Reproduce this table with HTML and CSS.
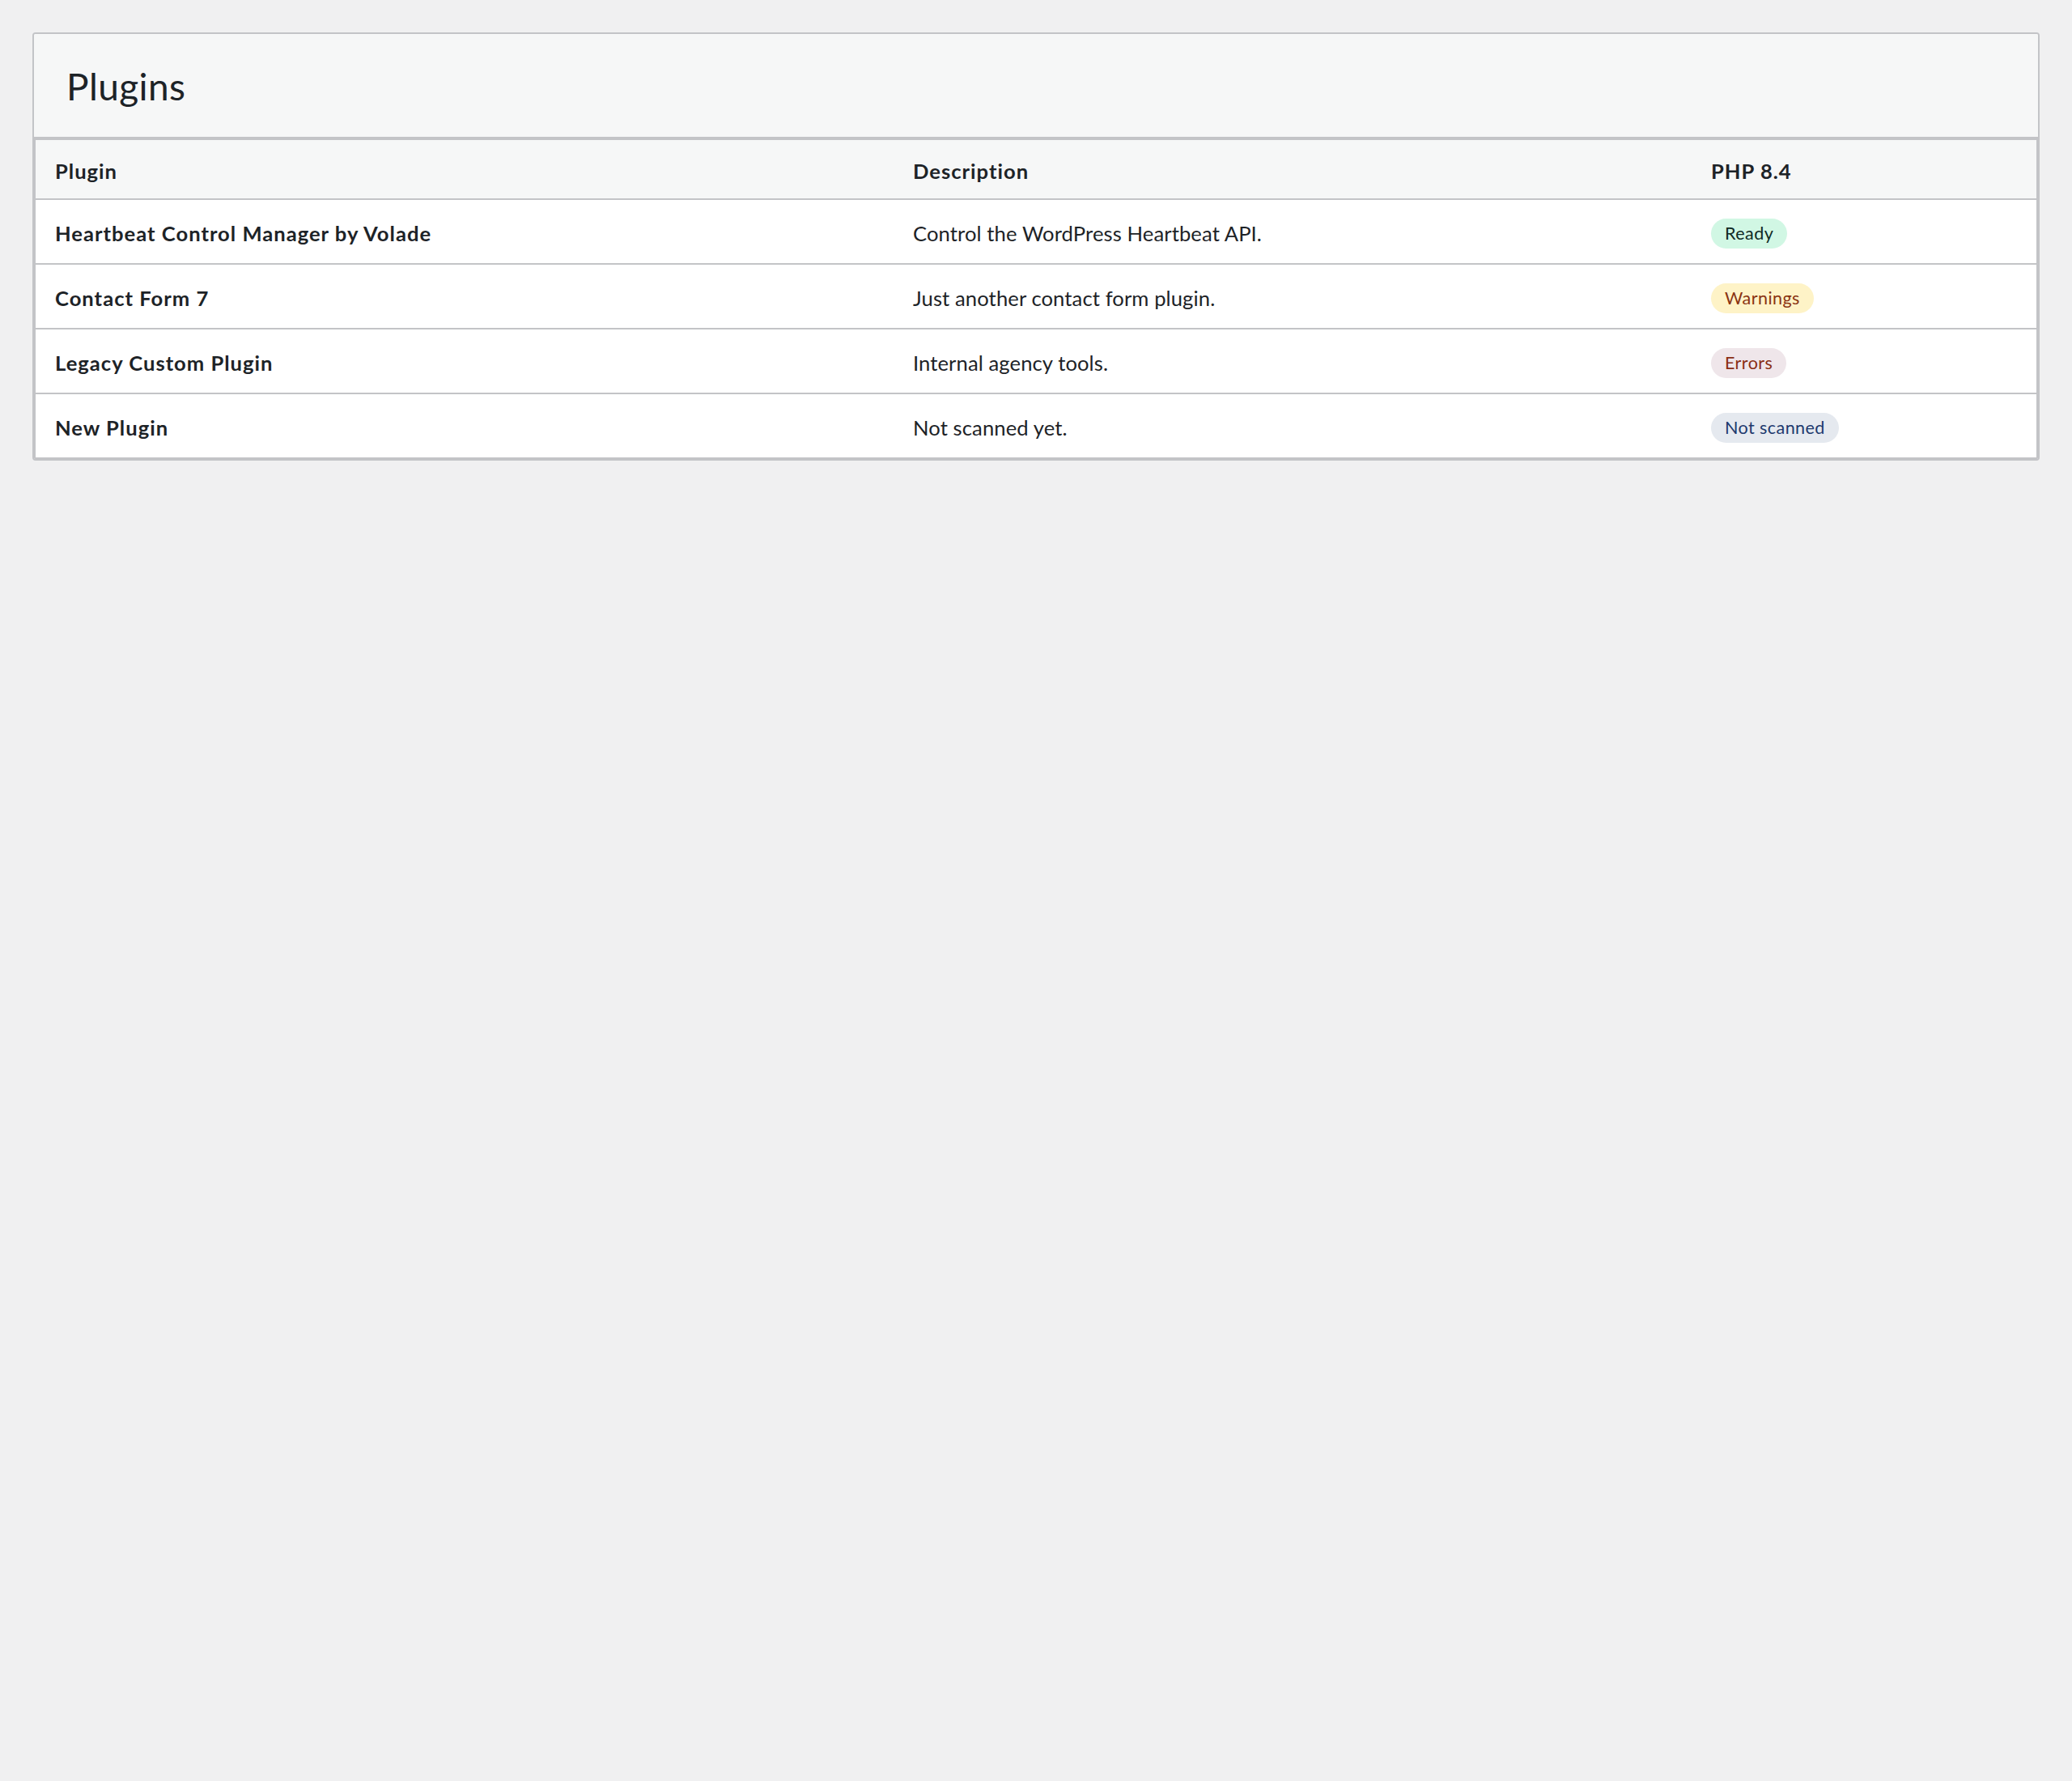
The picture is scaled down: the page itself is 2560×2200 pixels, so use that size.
FILE: index.html
```html
<!DOCTYPE html>
<html lang="en">
<head>
<meta charset="utf-8">
<title>Plugins</title>
<link rel="stylesheet" href="styles.css">
</head>
<body>
<div class="page">
  <section class="card">
    <header class="card-header">
      <h2 class="card-title">Plugins</h2>
    </header>
    <table class="plugins-table">
      <thead>
        <tr>
          <th class="col-plugin">Plugin</th>
          <th class="col-desc">Description</th>
          <th class="col-status">PHP 8.4</th>
        </tr>
      </thead>
      <tbody>
        <tr>
          <td class="name">Heartbeat Control Manager by Volade</td>
          <td>Control the WordPress Heartbeat API.</td>
          <td><span class="badge badge-ready">Ready</span></td>
        </tr>
        <tr>
          <td class="name">Contact Form 7</td>
          <td>Just another contact form plugin.</td>
          <td><span class="badge badge-warn">Warnings</span></td>
        </tr>
        <tr>
          <td class="name">Legacy Custom Plugin</td>
          <td>Internal agency tools.</td>
          <td><span class="badge badge-error">Errors</span></td>
        </tr>
        <tr>
          <td class="name">New Plugin</td>
          <td>Not scanned yet.</td>
          <td><span class="badge badge-none">Not scanned</span></td>
        </tr>
      </tbody>
    </table>
  </section>
</div>
</body>
</html>
```

FILE: styles.css
```css
* { box-sizing: border-box; }

html, body {
  margin: 0;
  padding: 0;
  background: #f0f0f1;
}

body {
  font-family: Lato, "Open Sans", "Liberation Sans", sans-serif;
  color: #1d2327;
  font-size: 25.6px;
}

.page {
  padding: 40px;
}

.card {
  background: #fff;
  border: 2px solid #c3c4c7;
  border-radius: 4px;
  overflow: hidden;
}

.card-header {
  background: #f6f7f7;
  height: 129px;
  display: flex;
  align-items: center;
  padding: 3px 0 0 40px;
  border-bottom: 2px solid #c3c4c7;
}

.card-title {
  margin: 0;
  font-size: 46px;
  font-weight: 400;
  line-height: 1;
  letter-spacing: 0.4px;
}

.plugins-table {
  width: 100%;
  border-collapse: collapse;
  table-layout: fixed;
  border: 2px solid #c3c4c7;
}

.plugins-table th,
.plugins-table td {
  text-align: left;
  padding: 3px 0 0 24px;
  vertical-align: middle;
  line-height: 36px;
  letter-spacing: 0.1px;
}

.plugins-table th {
  height: 74px;
  background: #f6f7f7;
  font-weight: 700;
  letter-spacing: 1px;
  border-bottom: 2px solid #c3c4c7;
}

.plugins-table td {
  height: 80px;
  border-bottom: 2px solid #c3c4c7;
}

.plugins-table tbody tr:last-child td {
  border-bottom: none;
  height: 80px;
}

.col-plugin { width: 1061px; }
.col-desc { width: 986px; }
.col-status { width: auto; }

.plugins-table td.name {
  font-weight: 700;
  letter-spacing: 1px;
}

.badge {
  display: inline-block;
  font-size: 21.6px;
  letter-spacing: 0.4px;
  line-height: 37px;
  height: 37px;
  padding: 0 17px;
  border-radius: 19px;
  white-space: nowrap;
}

.badge-ready { background: #d1f7e4; color: #0f2a24; }
.badge-warn { background: #fef3c7; color: #8a3412; }
.badge-error { background: #efe6ea; color: #8a2e14; }
.badge-none { background: #e5e9ef; color: #1e3a6e; }
```
